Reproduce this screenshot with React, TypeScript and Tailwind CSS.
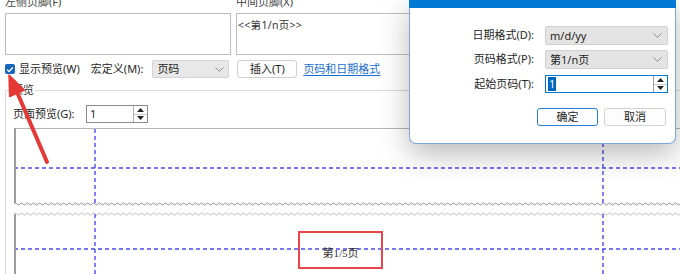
import React from "react";

function Chevron() {
  return (
    <svg width="9" height="5" viewBox="0 0 9 5" className="shrink-0">
      <path d="M0.5 0.5 L4.5 4.3 L8.5 0.5" fill="none" stroke="#8a8a8a" strokeWidth="1" />
    </svg>
  );
}

function SpinArrows({ border }: { border: string }) {
  return (
    <div className={`flex flex-col w-[14px] h-full border-l ${border}`}>
      <div className="flex-1 flex items-center justify-center border-b border-[#c8c8c8]">
        <svg width="7" height="4" viewBox="0 0 7 4">
          <path d="M3.5 0 L7 4 L0 4 Z" fill="#222" />
        </svg>
      </div>
      <div className="flex-1 flex items-center justify-center">
        <svg width="7" height="4" viewBox="0 0 7 4">
          <path d="M0 0 L7 0 L3.5 4 Z" fill="#222" />
        </svg>
      </div>
    </div>
  );
}

function wave(width: number) {
  let d = "M0 2";
  for (let x = 0; x < width; x += 6) {
    d += ` Q${x + 1.5} 0 ${x + 3} 2 Q${x + 4.5} 4 ${x + 6} 2`;
  }
  return d;
}

function Guides({ h, hy }: { h: number; hy: number }) {
  return (
    <svg className="absolute left-0 top-0" width="666" height={h}>
      <line x1="79" y1="0" x2="79" y2={h} stroke="#4a4af0" strokeWidth="1.4" strokeDasharray="4 3" />
      <line x1="587" y1="0" x2="587" y2={h} stroke="#4a4af0" strokeWidth="1.4" strokeDasharray="4 3" />
      <line x1="-2" y1={hy} x2="666" y2={hy} stroke="#4a4af0" strokeWidth="1.4" strokeDasharray="4 3" />
    </svg>
  );
}

function DlgSelect({ text }: { text: string }) {
  return (
    <div className="flex items-center h-[19px] bg-[#e4e4e4] border border-[#cfcfcf] rounded-[2px] pl-[4px] pr-[5px]">
      <span className="flex-1 leading-[17px]">{text}</span>
      <Chevron />
    </div>
  );
}

export default function App() {
  const w = wave(680);
  return (
    <div className="relative w-[680px] h-[274px] overflow-hidden bg-white text-[11px] text-[#1f1f1f] font-['Noto_Sans','Noto_Sans_CJK_SC',sans-serif]">
      <div className="pl-[5px] -mt-[6px]">
        {/* top row: footers */}
        <div className="flex gap-[5px]">
          <div className="w-[226px]">
            <div className="h-[16px] leading-[16px] mb-[3px] text-[#444]">左侧页脚(F)</div>
            <div className="h-[42px] border border-[#bdbdbd] bg-white" />
          </div>
          <div className="w-[340px]">
            <div className="h-[16px] leading-[16px] mb-[3px] text-[#444]">中间页脚(X)</div>
            <div className="h-[42px] border border-[#bdbdbd] bg-white pl-[1px] pt-[4px] leading-[14px] text-[10.5px] text-[#333] tracking-[0.3px]">
              &lt;&lt;第1/n页&gt;&gt;
            </div>
          </div>
        </div>

        {/* row 2 */}
        <div className="mt-[5px] flex items-center h-[18px]">
          <div className="w-[10px] h-[10px] rounded-[2px] bg-[#1565c0] flex items-center justify-center">
            <svg width="8" height="7" viewBox="0 0 8 7">
              <path d="M1 3.6 L3 5.5 L7 1.2" fill="none" stroke="#fff" strokeWidth="1.3" />
            </svg>
          </div>
          <span className="ml-[4px]">显示预览(W)</span>
          <span className="ml-[11px]">宏定义(M):</span>
          <div className="ml-[9px] w-[77px] h-[18px] flex items-center bg-[#e8e8e8] border border-[#d4d4d4] rounded-[2px] pl-[4px] pr-[4px]">
            <span className="flex-1">页码</span>
            <Chevron />
          </div>
          <div className="ml-[8px] w-[60px] h-[18px] flex items-center justify-center bg-[#fdfdfd] border border-[#d0d0d0] rounded-[3px]">
            插入(T)
          </div>
          <span className="ml-[6px] text-[#1a6fd0] underline underline-offset-2">页码和日期格式</span>
        </div>

        {/* group box */}
        <fieldset className="mt-[4px] border-t border-l border-[#dadada] min-w-0">
          <legend className="ml-[5px] px-[1px] leading-[16px] text-[#333]">预览</legend>
          <div className="pt-[7px] pl-[7px] flex items-center h-[25px]">
            <span className="w-[73px]">页面预览(G):</span>
            <div className="w-[62px] h-[18px] flex items-stretch border border-[#8a8a8a] bg-white">
              <span className="flex-1 pl-[3px] leading-[16px]">1</span>
              <SpinArrows border="border-[#b0b0b0]" />
            </div>
          </div>

          {/* preview pane */}
          <div className="ml-[8px] mt-[5px]">
            <div className="relative h-[75px] border-t border-[#b4b4b4] border-l-2 border-l-[#9c9c9c]">
              <Guides h={75} hy={39} />
              <svg className="absolute -left-[2px] -bottom-[3px]" width="680" height="4">
                <path d={w} fill="none" stroke="#8a8a8a" strokeWidth="0.9" />
              </svg>
            </div>
            <div className="h-[11px]" />
            <div className="relative h-[62px] border-l-2 border-l-[#9c9c9c]">
              <svg className="absolute -left-[2px] -top-[2px]" width="680" height="4">
                <path d={w} fill="none" stroke="#b8b8b8" strokeWidth="0.9" />
              </svg>
              <Guides h={62} hy={35} />
              <div className="absolute left-[282px] top-[17px] w-[85px] h-[38px] border-2 border-[#e8454b] flex items-center justify-center pt-[7px]">
                <span className="text-[11px] text-[#333] font-['Liberation_Serif','Noto_Sans_CJK_SC',serif]">第1/5页</span>
              </div>
            </div>
          </div>
        </fieldset>
      </div>

      {/* red arrow annotation */}
      <svg className="absolute left-0 top-0 pointer-events-none" width="80" height="180">
        <line x1="47" y1="162" x2="17" y2="92" stroke="#e53935" strokeWidth="4" strokeLinecap="round" />
        <path d="M9 75 L24.3 90.1 L9.7 96.5 Z" fill="#e53935" stroke="#e53935" strokeWidth="1.5" strokeLinejoin="round" />
      </svg>

      {/* overlay dialog */}
      <div className="absolute left-[409px] top-0 w-[267px] h-[144px] bg-white border border-t-0 border-[#7ea6d6] rounded-b-[7px] shadow-[0_10px_30px_rgba(0,0,0,0.28)] flex flex-col">
        <div className="h-[8px] bg-[#0078d4] -mx-[1px]" />
        <div className="pt-[18px] grid grid-cols-[124px_123px] gap-x-[11px] items-center">
          <span className="text-right">日期格式(D):</span>
          <DlgSelect text="m/d/yy" />
          <span className="text-right mt-[5px]">页码格式(P):</span>
          <div className="mt-[5px]">
            <DlgSelect text="第1/n页" />
          </div>
          <span className="text-right mt-[6px]">起始页码(T):</span>
          <div className="mt-[6px] h-[18px] flex items-stretch border border-[#0078d7] bg-white">
            <div className="flex-1 flex items-center pl-[2px]">
              <span className="bg-[#0067c0] text-white leading-[14px] px-[1px]">1</span>
            </div>
            <SpinArrows border="border-[#a0a0a0]" />
          </div>
        </div>
        <div className="mt-[15px] flex gap-[6px] pl-[127px]">
          <div className="w-[61px] h-[18px] flex items-center justify-center bg-[#fdfdfd] border border-[#2a7fd4] rounded-[3px]">确定</div>
          <div className="w-[62px] h-[18px] flex items-center justify-center bg-[#fdfdfd] border border-[#d3d3d3] rounded-[3px]">取消</div>
        </div>
      </div>
    </div>
  );
}
